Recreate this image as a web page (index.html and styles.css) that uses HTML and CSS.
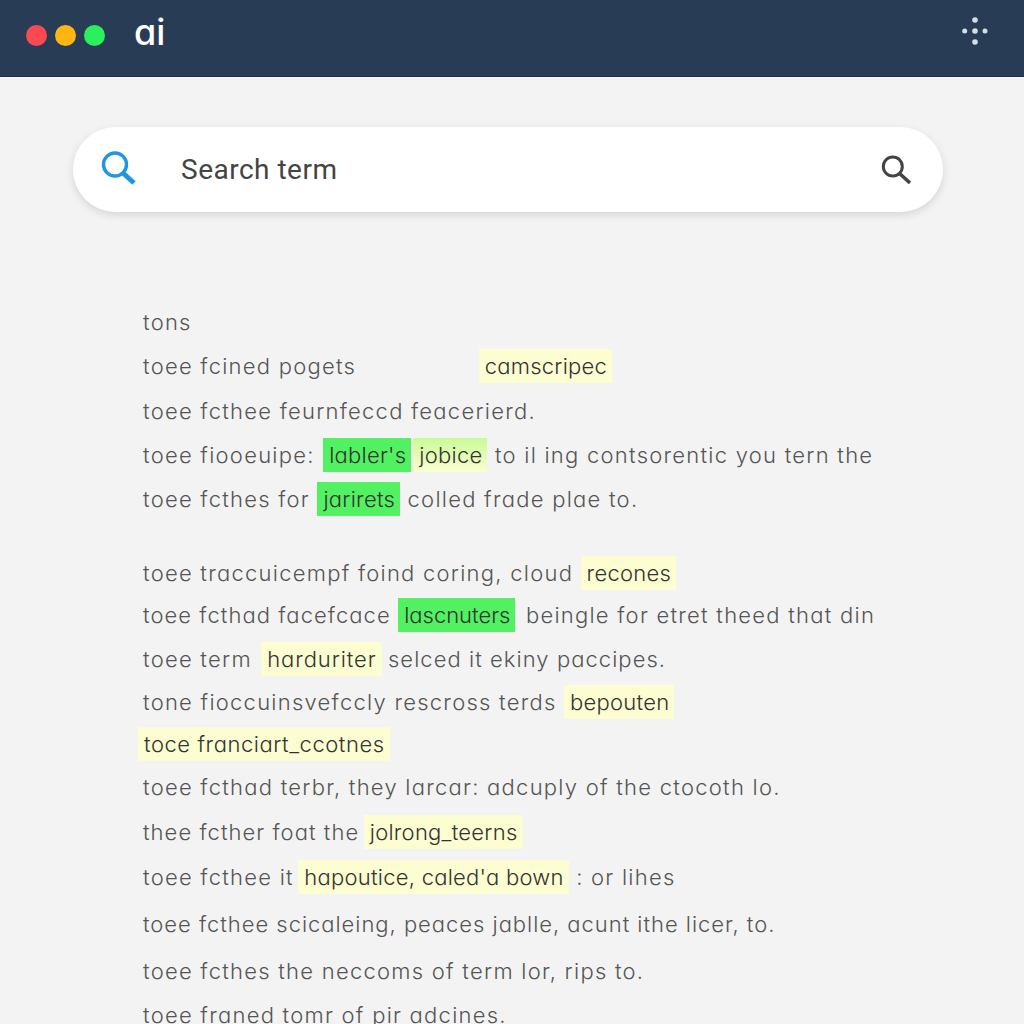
FILE: index.html
```html
<!DOCTYPE html>
<html>
<head>
    <title>ai search</title>
    <link rel="stylesheet" href="styles.css">
</head>
<body>
    <header class="topbar">
        <div class="dots">
            <span class="dot dot-red"></span>
            <span class="dot dot-amber"></span>
            <span class="dot dot-green"></span>
        </div>
        <div class="brand">ai</div>
        <svg class="menu-icon" width="28" height="28" viewBox="0 0 28 28">
            <circle cx="14" cy="3" r="2.8"/>
            <circle cx="3.7" cy="14" r="2.5"/>
            <circle cx="14" cy="14" r="2.8"/>
            <circle cx="24" cy="14" r="2.5"/>
            <circle cx="14" cy="25" r="2.8"/>
        </svg>
    </header>

    <main class="content">
        <div class="search">
            <svg class="search-icon" width="38" height="38" viewBox="0 0 38 38" fill="none" stroke="#1e96e0">
                <circle cx="15" cy="13.5" r="11.5" stroke-width="3.4"/>
                <path d="M23 22 L34 32" stroke-width="5"/>
            </svg>
            <span class="search-text">Search term</span>
            <svg class="search-go" width="30" height="30" viewBox="0 0 30 30" fill="none" stroke="#444">
                <circle cx="11.8" cy="11.5" r="9.5" stroke-width="3"/>
                <path d="M18 18 L29 28" stroke-width="3.6"/>
            </svg>
        </div>

        <section class="results">
            <p class="line">tons</p>
            <p class="line">toee fcined pogets <mark class="hl gap-wide">camscripec</mark></p>
            <p class="line wide">toee fcthee feurnfeccd feacerierd.</p>
            <p class="line">toee fiooeuipe: <mark class="hl hl-green push-1">labler's</mark><mark class="hl hl-fade">jobice</mark> to il ing contsorentic you tern the</p>
            <p class="line">toee fcthes for <mark class="hl hl-green">jarirets</mark> colled frade plae to.</p>

            <p class="line para">toee traccuicempf foind coring, cloud <mark class="hl">recones</mark></p>
            <p class="line tight"><span class="tracked">toee fcthad facefcace</span> <mark class="hl hl-green hl-snug">lascnuters</mark> beingle for etret theed that din</p>
            <p class="line">toee term <mark class="hl hl-wide">harduriter</mark> <span class="tracked">selced it ekiny paccipes.</span></p>
            <p class="line snug">tone fioccuinsvefccly rescross terds <mark class="hl">bepouten</mark></p>
            <p class="line tight"><mark class="hl hl-flush">toce franciart_ccotnes</mark></p>
            <p class="line snug">toee fcthad terbr, they larcar: adcuply of the ctocoth lo.</p>
            <p class="line wide"><span class="tracked">thee fcther foat the</span> <mark class="hl pull-3">jolrong_teerns</mark></p>
            <p class="line wide">toee fcthee it <mark class="hl pull-3">hapoutice, caled'a bown</mark> : or lihes</p>
            <p class="line wider condensed">toee fcthee scicaleing, peaces jablle, acunt ithe licer, to.</p>
            <p class="line wider">toee fcthes the neccoms of term lor, rips to.</p>
            <p class="line">toee franed tomr of pir adcines.</p>
        </section>
    </main>
</body>
</html>
```

FILE: styles.css
```css
html, body {
    height: 100%;
    overflow: hidden;
}

body {
    margin: 0;
    background: #f3f3f3;
    font-family: Inter, 'Liberation Sans', sans-serif;
    font-feature-settings: "cv11";
    color: #555;
}

.topbar {
    height: 76px;
    background: #293c55;
    border-bottom: 1px solid #1f2f45;
    display: flex;
    align-items: center;
    padding: 0 35px 0 26px;
}

.dots {
    display: flex;
    gap: 8px;
    margin-bottom: 6px;
}

.dot {
    width: 21px;
    height: 21px;
    border-radius: 50%;
}

.dot-red { background: #fb4a4f; }
.dot-amber { background: #fdb512; }
.dot-green { background: #2bf05c; }

.brand {
    margin-left: 29px;
    margin-bottom: 12px;
    font-size: 36px;
    font-weight: 500;
    color: #fff;
}

.menu-icon {
    margin-left: auto;
    margin-bottom: 15px;
    fill: #d3e0e8;
}

.content {
    padding: 50px 81px 0 73px;
}

.search {
    height: 85px;
    display: flex;
    align-items: center;
    background: #fff;
    border-radius: 43px;
    box-shadow: 0 3px 8px rgba(0, 0, 0, 0.12);
    padding: 0 32px 0 27px;
}

.search-text {
    margin-left: 43px;
    font-family: Roboto, sans-serif;
    font-size: 28px;
    letter-spacing: 0.5px;
    color: #444;
}

.search-go {
    margin-left: auto;
}

.results {
    padding: 88px 0 0 70px;
}

.line {
    margin: 0;
    height: 44px;
    line-height: 44px;
    font-size: 22px;
    font-weight: 300;
    letter-spacing: 1.25px;
    white-space: nowrap;
}

.condensed { letter-spacing: 0.97px; }
.tracked { letter-spacing: 1.05px; }

.para { margin-top: 30px; }
.tight { margin-top: -2px; }
.snug { margin-top: -1px; }
.wide { margin-top: 1px; }
.wider { margin-top: 3px; }

.hl {
    display: inline-block;
    line-height: 34px;
    padding: 0 5px 0 6px;
    background: #fcfdd1;
    color: #333;
    font-weight: 350;
    letter-spacing: 0.25px;
}

.hl-green { background: #52f162; }
.hl-fade {
    margin-left: 2px;
    background: linear-gradient(#c9fb96, #fcfdd1);
}
.hl-flush {
    margin-left: -5px;
    letter-spacing: 0.55px;
}
.hl-snug {
    margin-right: 3px;
    letter-spacing: 0;
}
.hl-wide {
    margin-left: 2px;
    margin-right: -1px;
    letter-spacing: 0.9px;
}
.pull-3 { margin-left: -3px; }
.push-1 { margin-left: 1px; }
.gap-wide { margin-left: 115px; }
```
